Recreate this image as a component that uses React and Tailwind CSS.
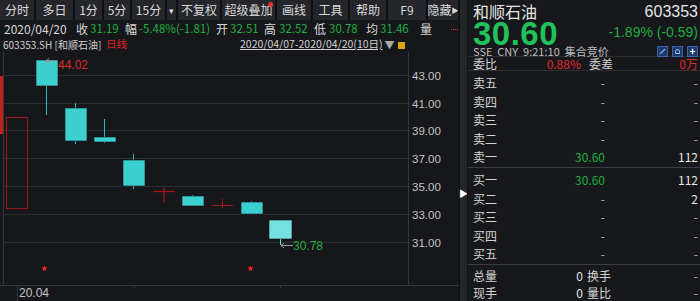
import React from 'react';

const FONT = { fontFamily: '"Noto Sans CJK SC", "Liberation Sans", sans-serif' };

const toolbar = [
  { label: '分时', w: 'w-[34px]' },
  { label: '多日', w: 'w-[37px]' },
  { label: '1分', w: 'w-[27px]' },
  { label: '5分', w: 'w-[26px]' },
  { label: '15分', w: 'w-[33px]' },
  { label: '▾', w: 'w-[9px]', small: true },
  { label: '不复权', w: 'w-[42px]' },
  { label: '超级叠加', w: 'w-[53px]', dot: true },
  { label: '画线', w: 'w-[34px]' },
  { label: '工具', w: 'w-[35px]' },
  { label: '帮助', w: 'w-[36px]' },
  { label: 'F9', w: 'w-[38px]' },
  { label: '隐藏', w: 'w-[30px]', arrow: true },
];

const quote = [
  { k: '收', v: '31.19', kw: 'w-[14px]', vw: 'w-[35px]' },
  { k: '幅', v: '-5.48%(-1.81)', kw: 'w-[14px]', vw: 'w-[77px]' },
  { k: '开', v: '32.51', kw: 'w-[14px]', vw: 'w-[34px]' },
  { k: '高', v: '32.52', kw: 'w-[15px]', vw: 'w-[35px]' },
  { k: '低', v: '30.78', kw: 'w-[15px]', vw: 'w-[37px]' },
  { k: '均', v: '31.46', kw: 'w-[14px]', vw: 'w-[40px]' },
];

const candles = [
  { x: 36, top: 60, bot: 86, hi: 60, lo: 115 },
  { x: 65, top: 108, bot: 141, hi: 103, lo: 144 },
  { x: 94, top: 137, bot: 142, hi: 119, lo: 143 },
  { x: 123, top: 160, bot: 186, hi: 154, lo: 189 },
  { x: 182, top: 196, bot: 206, hi: 195, lo: 206 },
  { x: 241, top: 202, bot: 214, hi: 201, lo: 214 },
];

const grid = [
  { y: 75, p: '43.00' },
  { y: 103, p: '41.00' },
  { y: 130, p: '39.00' },
  { y: 158, p: '37.00' },
  { y: 186, p: '35.00' },
  { y: 214, p: '33.00' },
  { y: 242, p: '31.00' },
];

function Star({ cx, cy }) {
  const pts = [];
  for (let i = 0; i < 10; i++) {
    const r = i % 2 === 0 ? 3.2 : 1.4;
    const a = -Math.PI / 2 + (i * Math.PI) / 5;
    pts.push(`${cx + r * Math.cos(a)},${cy + r * Math.sin(a)}`);
  }
  return <polygon points={pts.join(' ')} fill="#e8262a" />;
}

function Chart() {
  return (
    <svg width="459" height="249" viewBox="0 52 459 249" className="block">
      <line x1="3.5" y1="52" x2="3.5" y2="285" stroke="#34363c" />
      {grid.map((g) => (
        <g key={g.p}>
          <line x1="4" y1={g.y + 0.5} x2="410" y2={g.y + 0.5} stroke="#2c2e34" />
          <text x="412" y={g.y + 4.5} fill="#c4c4c4" fontSize="11.5" fontFamily="Liberation Sans, sans-serif">{g.p}</text>
        </g>
      ))}
      <line x1="408.5" y1="52" x2="408.5" y2="285" stroke="#34363c" />
      <line x1="0" y1="285.5" x2="459" y2="285.5" stroke="#34363c" />
      <line x1="17.5" y1="285" x2="17.5" y2="301" stroke="#34363c" />
      <line x1="134.5" y1="285" x2="134.5" y2="288" stroke="#34363c" />
      <line x1="280.5" y1="285" x2="280.5" y2="288" stroke="#34363c" />
      <rect x="0" y="76" width="3" height="58" fill="#c41f1f" />
      <rect x="6.5" y="117.5" width="21" height="91" fill="none" stroke="#a31515" />
      {candles.map((c) => (
        <g key={c.x}>
          <line x1={c.x + 10.5} y1={c.hi} x2={c.x + 10.5} y2={c.lo} stroke="#2fb8b8" />
          <rect x={c.x} y={c.top} width="22" height={c.bot - c.top} fill="#3ccfcf" stroke="#111" strokeWidth="0.6" />
        </g>
      ))}
      <line x1="153" y1="191.5" x2="175" y2="191.5" stroke="#a31515" strokeWidth="1.3" />
      <line x1="164" y1="188" x2="164" y2="203" stroke="#a31515" strokeWidth="1.3" />
      <line x1="212" y1="205.5" x2="233" y2="205.5" stroke="#a31515" />
      <line x1="222.5" y1="199" x2="222.5" y2="208" stroke="#a31515" />
      <line x1="280.5" y1="239" x2="280.5" y2="245" stroke="#6ee0e0" />
      <rect x="269" y="220" width="23" height="19" fill="#74e0e0" stroke="#111" strokeWidth="0.6" />
      <path d="M46 61 H57 M46 61 L49 58.5 M46 61 L49 63.5" stroke="#9a9a9a" fill="none" />
      <text x="58" y="69" fill="#dd2a2a" fontSize="12" fontFamily="Liberation Sans, sans-serif">44.02</text>
      <path d="M281 245.5 H293 M281 245.5 L284 243 M281 245.5 L284 248" stroke="#9a9a9a" fill="none" />
      <text x="293" y="249.5" fill="#1fae3f" fontSize="12" fontFamily="Liberation Sans, sans-serif">30.78</text>
      <Star cx={44.5} cy={268.5} />
      <Star cx={250.5} cy={268.5} />
      <text x="19" y="297" fill="#c4c4c4" fontSize="12" fontFamily="Liberation Sans, sans-serif">20.04</text>
    </svg>
  );
}

function OrderRow({ label, price, vol }) {
  return (
    <div className="grid grid-cols-[60px_72px_1fr] h-[18.5px] items-center text-[12px] leading-none">
      <span className="text-[#d4d4d4]">{label}</span>
      <span className={`text-right ${price === '-' ? 'text-[#b8b8b8]' : 'text-[#1fae3f]'}`}>{price}</span>
      <span className={`text-right ${vol === '-' ? 'text-[#b8b8b8]' : 'text-[#e6e6e6]'}`}>{vol}</span>
    </div>
  );
}

function IconBox({ children }) {
  return (
    <div className="w-[11px] h-[11px] bg-[#1f3a6b] border border-[#3a64b0] flex items-center justify-center">
      {children}
    </div>
  );
}

export default function App() {
  const sells = [
    ['卖五', '-', '-'],
    ['卖四', '-', '-'],
    ['卖三', '-', '-'],
    ['卖二', '-', '-'],
    ['卖一', '30.60', '112'],
  ];
  const buys = [
    ['买一', '30.60', '112'],
    ['买二', '-', '2'],
    ['买三', '-', '-'],
    ['买四', '-', '-'],
    ['买五', '-', '-'],
  ];
  return (
    <div className="w-[700px] h-[301px] flex bg-[#15171b] overflow-hidden select-none" style={FONT}>
      <div className="w-[459px] shrink-0 flex flex-col">
        <div className="h-[20px] flex gap-[2px] bg-[#0e0f12]">
          {toolbar.map((t) => (
            <div key={t.label} className={`${t.w} shrink-0 whitespace-nowrap relative flex items-center justify-center bg-[#24262b] text-[#dadada] ${t.small ? 'text-[9px]' : 'text-[12px]'} leading-none`}>
              {t.label}
              {t.arrow && <span className="text-[7px]">▶</span>}
              {t.dot && <span className="absolute right-[2px] top-[2px] w-[5px] h-[5px] rounded-full bg-[#f03030]" />}
            </div>
          ))}
        </div>
        <div className="h-[17px] flex items-center text-[12px] leading-none pl-[4px] text-[#d8d8d8] relative whitespace-nowrap">
          <span className="w-[72px] shrink-0">2020/04/20</span>
          {quote.map((q) => (
            <React.Fragment key={q.k}>
              <span className={`${q.kw} shrink-0`}>{q.k}</span>
              <span className={`${q.vw} shrink-0 text-[11.5px] text-[#1fae3f]`}>{q.v}</span>
            </React.Fragment>
          ))}
          <span className="shrink-0">量</span>
          <span className="absolute right-[1px] top-[9px] w-[7px] border-t border-dotted border-[#f03030]" />
        </div>
        <div className="h-[15px] flex items-center leading-none text-[#d0d0d0] whitespace-nowrap">
          <span className="w-[106px] shrink-0 pl-[3px] text-[10px]">603353.SH [和顺石油]</span>
          <span className="w-[134px] text-[#e02424] shrink-0 text-[10.5px]">日线</span>
          <span className="underline shrink-0 text-[10.5px]">2020/04/07-2020/04/20(10日)</span>
          <span className="ml-[2px] text-[#aaa] text-[10px] shrink-0">▼</span>
          <span className="ml-[3px] w-[7px] h-[7px] bg-[#d9a514] relative top-[1px] shrink-0" />
        </div>
        <Chart />
      </div>
      <div className="w-[8px] shrink-0 bg-[#24262a] border-l border-[#0e0f12] flex flex-col items-center pt-[189px]">
        <span className="text-[9px] leading-none text-white">▶</span>
      </div>
      <div className="flex-1 flex flex-col border-l border-[#0e0f12] bg-[#16181c]">
        <div className="h-[57px] pl-[5px] pr-[2px] flex flex-col border-b border-[#2c2e33]">
          <div className="flex justify-between items-center h-[21px] pt-[2px] text-[16px] leading-[19px] text-[#e4e4e4]">
            <span>和顺石油</span>
            <span className="font-['Liberation_Sans']">603353</span>
          </div>
          <div className="flex justify-between items-center h-[25px]">
            <span className="text-[33px] leading-[25px] font-bold text-[#21c25a] font-['Liberation_Sans'] tracking-[0.5px]">30.60</span>
            <span className="text-[14px] leading-[14px] text-[#1fae3f] -mt-[3px] font-['Liberation_Sans']">-1.89% (-0.59)</span>
          </div>
          <div className="flex justify-between items-center h-[10px]">
            <span className="text-[11px] leading-[10px] text-[#bdbdbd] whitespace-pre">SSE  CNY  9:21:10  集合竞价</span>
            <div className="flex gap-[4px]">
              <IconBox><span className="block w-[1px] h-[7px] bg-[#9cc0ff] rotate-45" /></IconBox>
              <IconBox><span className="block w-[5px] h-[5px] border border-[#9cc0ff] rounded-t-full" /></IconBox>
              <IconBox><span className="text-[10px] leading-none text-white font-bold">+</span></IconBox>
            </div>
          </div>
        </div>
        <div className="h-[14px] pl-[5px] pr-[2px] flex items-center text-[12px] leading-none border-b border-[#2c2e33]">
          <span className="w-[40px] text-[#d4d4d4]">委比</span>
          <span className="w-[68px] text-right text-[#e02828]">0.88%</span>
          <span className="ml-[8px] text-[#d4d4d4]">委差</span>
          <span className="flex-1 text-right text-[#e02828]">0万</span>
        </div>
        <div className="h-[97px] pt-[3px] pl-[5px] pr-[2px] border-b border-[#3a3c42]">
          {sells.map((r) => <OrderRow key={r[0]} label={r[0]} price={r[1]} vol={r[2]} />)}
        </div>
        <div className="h-[97px] pt-[3px] pl-[5px] pr-[2px] border-b border-[#3a3c42]">
          {buys.map((r) => <OrderRow key={r[0]} label={r[0]} price={r[1]} vol={r[2]} />)}
        </div>
        <div className="pt-[2px] pl-[5px] pr-[2px]">
          {[['总量', '0', '换手', '-'], ['现手', '0', '量比', '-']].map((r) => (
            <div key={r[0]} className="h-[17px] flex items-center text-[12px] leading-none">
              <span className="w-[40px] text-[#d4d4d4]">{r[0]}</span>
              <span className="w-[70px] text-right text-[#e6e6e6]">{r[1]}</span>
              <span className="ml-[4px] text-[#d4d4d4]">{r[2]}</span>
              <span className="flex-1 text-right text-[#b8b8b8]">{r[3]}</span>
            </div>
          ))}
        </div>
      </div>
    </div>
  );
}
